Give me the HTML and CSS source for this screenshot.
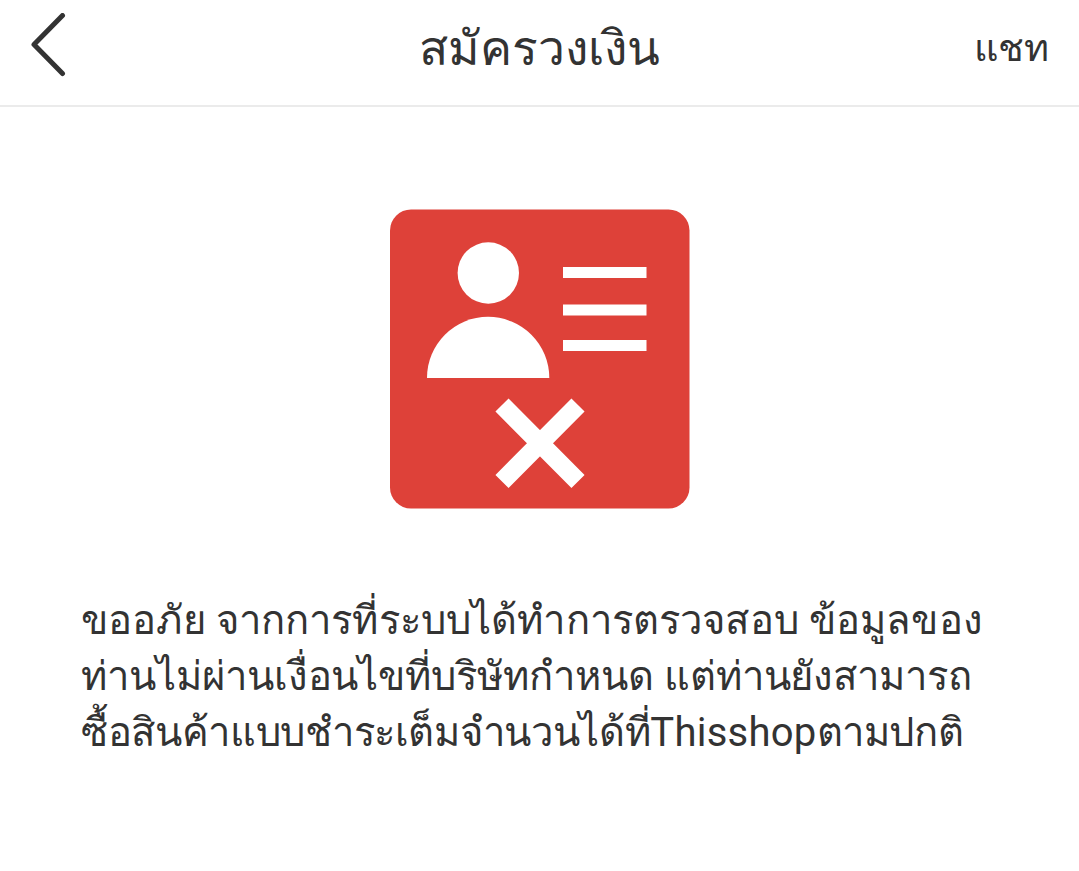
FILE: index.html
```html
<!DOCTYPE html>
<html lang="th">
<head>
  <meta charset="UTF-8" />
  <meta name="viewport" content="width=device-width, initial-scale=1.0"/>
  <title>สมัครวงเงิน</title>
  <link rel="stylesheet" href="styles.css">
</head>
<body>

  <header class="topbar">
    <a class="back" href="#" aria-label="Back">
      <svg width="36" height="64" viewBox="0 0 36 64">
        <path d="M32.500 2.500 L4 31.500 L32.500 60.500" />
      </svg>
    </a>
    <h1 class="title">สมัครวงเงิน</h1>
    <a class="chat" href="#">แชท</a>
  </header>

  <main class="result">
    <svg class="result-icon" width="300" height="300" viewBox="0 0 300 300">
      <rect class="card" y="0.500" width="299.500" height="299" rx="21" />
      <circle cx="98.300" cy="64" r="30.700" />
      <path d="M37 169 A61 61 0 0 1 159.300 169 Z" />
      <rect x="173" y="58" width="83.500" height="11" />
      <rect x="173" y="95.500" width="83.500" height="11" />
      <rect x="173" y="131" width="83.500" height="11" />
      <path class="cross" d="M112 196 L188 272.500 M188 196 L112 272.500" />
    </svg>

    <p class="message">
      <span class="line loose">ขออภัย จากการที่ระบบได้ทำการตรวจสอบ ข้อมูลของ</span>
      <span class="line">ท่านไม่ผ่านเงื่อนไขที่บริษัทกำหนด แต่ท่านยังสามารถ</span>
      <span class="line tight">ซื้อสินค้าแบบชำระเต็มจำนวนได้ที่<span class="brand">Thisshop</span>ตามปกติ</span>
    </p>
  </main>

</body>
</html>
```
FILE: styles.css
```css
body {
  margin: 0;
  background-color: #fff;
  color: #333;
  font-family: Roboto, sans-serif;
}

.topbar {
  display: flex;
  justify-content: space-between;
  height: 105px;
  padding: 0 30px;
  border-bottom: 2px solid #ebebeb;
}

.back,
.chat {
  flex: 1;
  color: #333;
  text-decoration: none;
}

.back svg {
  display: block;
  margin-top: 13px;
  fill: none;
  stroke: #333;
  stroke-width: 5;
  stroke-linecap: round;
  stroke-linejoin: round;
}

.title {
  margin: 0;
  font-size: 48px;
  font-weight: 400;
  line-height: 98px;
}

.chat {
  font-size: 38px;
  line-height: 97px;
  text-align: right;
}

.result {
  padding: 102px 81px 0;
}

.result-icon {
  display: block;
  margin: 0 auto;
  fill: #fff;
}

.result-icon .card {
  fill: #de4139;
}

.result-icon .cross {
  fill: none;
  stroke: #fff;
  stroke-width: 18.5;
}

.message {
  margin: 84px 0 0;
  font-size: 40px;
  line-height: 56px;
  white-space: nowrap;
}

.line {
  display: block;
  letter-spacing: -0.05px;
}

.loose {
  letter-spacing: 0.13px;
}

.tight {
  letter-spacing: -0.35px;
}

.brand {
  letter-spacing: 0.25px;
}
```
